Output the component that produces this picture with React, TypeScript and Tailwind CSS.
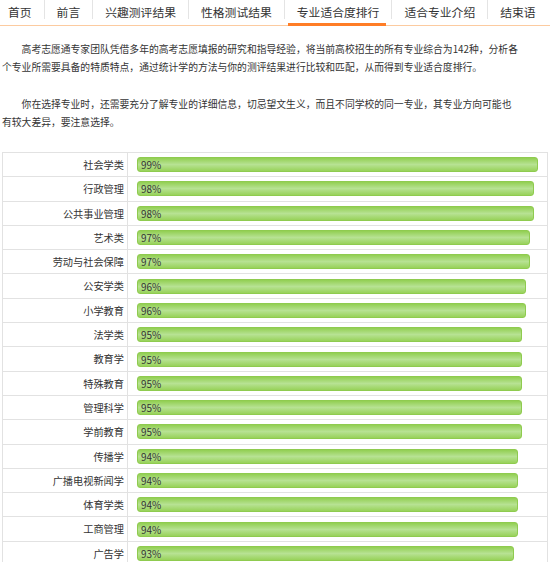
import React from 'react';

const TABS = ['首页', '前言', '兴趣测评结果', '性格测试结果', '专业适合度排行', '适合专业介绍', '结束语'];
const ACTIVE = 4;

const ROWS: [string, number][] = [
  ['社会学类', 99],
  ['行政管理', 98],
  ['公共事业管理', 98],
  ['艺术类', 97],
  ['劳动与社会保障', 97],
  ['公安学类', 96],
  ['小学教育', 96],
  ['法学类', 95],
  ['教育学', 95],
  ['特殊教育', 95],
  ['管理科学', 95],
  ['学前教育', 95],
  ['传播学', 94],
  ['广播电视新闻学', 94],
  ['体育学类', 94],
  ['工商管理', 94],
  ['广告学', 93],
];

const TabBar = () => (
  <div className="flex h-[26px] border-b border-[#fccba0]">
    {TABS.map((t, i) => (
      <React.Fragment key={t}>
        <div className={`relative h-full pt-[4px] ${i === 0 ? 'pl-[8px]' : 'pl-[12px]'} pr-[12px]`}>
          <span className="block text-[11.8px] leading-[16px] text-[#333] whitespace-nowrap">{t}</span>
          {i === ACTIVE && <div className="absolute left-[3px] right-[5px] bottom-[-1px] h-[3px] bg-[#ff7d26]" />}
        </div>
        {i < TABS.length - 1 && <div className="w-px h-[19px] bg-[#e4e4e4] shrink-0" />}
      </React.Fragment>
    ))}
  </div>
);

const Bar = ({ pct }: { pct: number }) => (
  <div
    className="relative h-[15px] rounded-[3px] border border-[#8fcb4f] bg-[linear-gradient(to_bottom,#92cf52_0%,#b7e293_50%,#98d25a_100%)]"
    style={{ width: `${pct}%` }}
  >
    <span className="absolute left-[3px] top-0 text-[10px] leading-[13px] text-[#333]">{pct}%</span>
  </div>
);

export default function App() {
  return (
    <div className="w-[550px] h-[562px] overflow-hidden bg-white text-[#333] [font-family:'Noto_Sans_CJK_SC',sans-serif]">
      <TabBar />
      <div className="px-[2px]">
        <div className="w-[518px] mt-[14px] text-[9.8px] leading-[18px]">
          <p className="indent-[2em]">
            高考志愿通专家团队凭借多年的高考志愿填报的研究和指导经验，将当前高校招生的所有专业综合为142种，分析各个专业所需要具备的特质特点，通过统计学的方法与你的测评结果进行比较和匹配，从而得到专业适合度排行。
          </p>
          <p className="indent-[2em] mt-[19px]">
            你在选择专业时，还需要充分了解专业的详细信息，切忌望文生义，而且不同学校的同一专业，其专业方向可能也有较大差异，要注意选择。
          </p>
        </div>
        <div className="mt-[21px] border-t border-x border-[#e2e2e2]">
          {ROWS.map(([name, pct]) => (
            <div key={name} className="flex h-[24.3px] border-b border-[#e2e2e2]">
              <div className="w-[125px] shrink-0 border-r border-[#e2e2e2] flex items-center justify-end pr-[3px] text-[10.2px] text-[#333]">
                {name}
              </div>
              <div className="flex-1 flex items-center pl-[9px] pr-[5px]">
                <div className="w-full">
                  <Bar pct={pct} />
                </div>
              </div>
            </div>
          ))}
        </div>
      </div>
    </div>
  );
}
